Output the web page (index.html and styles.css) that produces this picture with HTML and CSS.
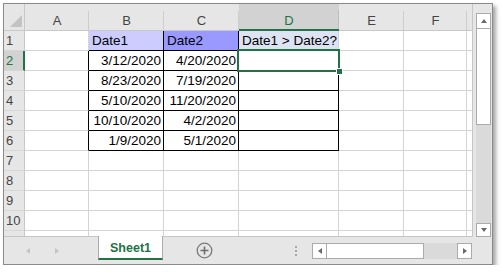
FILE: index.html
```html
<!DOCTYPE html>
<html lang="en">
<head>
    <meta charset="UTF-8">
    <title>Sheet1</title>
    <link rel="stylesheet" href="styles.css">
</head>
<body>
    <div class="window">
        <div class="main">
            <div class="sheet">
                <div class="corner">
                    <svg width="20" height="26" viewBox="0 0 20 26"><polygon points="6,23 18,23 18,11" fill="#c3c3c3"/></svg>
                </div>
                <div class="ch">A</div>
                <div class="ch">B</div>
                <div class="ch">C</div>
                <div class="ch ch-sel">D</div>
                <div class="ch">E</div>
                <div class="ch">F</div>
                <div class="ch"></div>

                <div class="rh">1</div>
                <div class="c"></div>
                <div class="c fill1 bv bb">Date1</div>
                <div class="c fill2 bv bb">Date2</div>
                <div class="c fill3 bb">Date1 &gt; Date2?</div>
                <div class="c"></div>
                <div class="c"></div>
                <div class="c"></div>

                <div class="rh rh-sel">2</div>
                <div class="c bv"></div>
                <div class="c num bk">3/12/2020</div>
                <div class="c num bk">4/20/2020</div>
                <div class="c bk active"><div class="selection"><div class="handle"></div></div></div>
                <div class="c"></div>
                <div class="c"></div>
                <div class="c"></div>

                <div class="rh">3</div>
                <div class="c bv"></div>
                <div class="c num bk">8/23/2020</div>
                <div class="c num bk">7/19/2020</div>
                <div class="c bk"></div>
                <div class="c"></div>
                <div class="c"></div>
                <div class="c"></div>

                <div class="rh">4</div>
                <div class="c bv"></div>
                <div class="c num bk">5/10/2020</div>
                <div class="c num bk">11/20/2020</div>
                <div class="c bk"></div>
                <div class="c"></div>
                <div class="c"></div>
                <div class="c"></div>

                <div class="rh">5</div>
                <div class="c bv"></div>
                <div class="c num bk">10/10/2020</div>
                <div class="c num bk">4/2/2020</div>
                <div class="c bk"></div>
                <div class="c"></div>
                <div class="c"></div>
                <div class="c"></div>

                <div class="rh">6</div>
                <div class="c bv"></div>
                <div class="c num bk">1/9/2020</div>
                <div class="c num bk">5/1/2020</div>
                <div class="c bk"></div>
                <div class="c"></div>
                <div class="c"></div>
                <div class="c"></div>

                <div class="rh">7</div>
                <div class="c"></div><div class="c"></div><div class="c"></div><div class="c"></div><div class="c"></div><div class="c"></div><div class="c"></div>
                <div class="rh">8</div>
                <div class="c"></div><div class="c"></div><div class="c"></div><div class="c"></div><div class="c"></div><div class="c"></div><div class="c"></div>
                <div class="rh">9</div>
                <div class="c"></div><div class="c"></div><div class="c"></div><div class="c"></div><div class="c"></div><div class="c"></div><div class="c"></div>
                <div class="rh">10</div>
                <div class="c"></div><div class="c"></div><div class="c"></div><div class="c"></div><div class="c"></div><div class="c"></div><div class="c"></div>
                <div class="rh"></div>
                <div class="c"></div><div class="c"></div><div class="c"></div><div class="c"></div><div class="c"></div><div class="c"></div><div class="c"></div>
            </div>

            <div class="vscroll">
                <div class="sbtn vbtn"><span class="tri tri-up"></span></div>
                <div class="vthumb"></div>
                <div class="vtrack"></div>
                <div class="sbtn vbtn vbtn-down"><span class="tri tri-down"></span></div>
            </div>
        </div>

        <div class="tabbar">
            <span class="nav nav-left"></span>
            <span class="nav nav-right"></span>
            <div class="tab">Sheet1</div>
            <div class="add">
                <svg width="17" height="17" viewBox="0 0 17 17">
                    <circle cx="8.5" cy="8.5" r="7.3" fill="none" stroke="#7a7a7a" stroke-width="1.3"/>
                    <path d="M8.5 4.5v8M4.5 8.5h8" stroke="#6e6e6e" stroke-width="1.6"/>
                </svg>
            </div>
            <div class="dots"><span></span><span></span><span></span></div>
            <div class="hscroll">
                <div class="sbtn hbtn"><span class="tri tri-left"></span></div>
                <div class="hthumb"></div>
                <div class="htrack"></div>
                <div class="sbtn hbtn"><span class="tri tri-right"></span></div>
            </div>
        </div>
    </div>
</body>
</html>
```
FILE: styles.css
```css
body {
    margin: 0;
    background: #ffffff;
    font-family: "Liberation Sans", Arial, sans-serif;
}
.window {
    margin: 3px 0 0 3px;
    width: 490px;
    height: 262px;
    box-sizing: border-box;
    border: 1px solid #8a8a8a;
    background: #e6e6e6;
    box-shadow: 3px 3px 4px rgba(0, 0, 0, 0.35);
}
.main {
    display: flex;
    height: 233px;
}
.sheet {
    width: 469px;
    height: 233px;
    box-sizing: border-box;
    border-right: 1px solid #c6c6c6;
    border-bottom: 1px solid #c6c6c6;
    overflow: hidden;
    display: grid;
    grid-template-columns: 21px 64px 75px 75px 100px 65px 63px 1fr;
    grid-template-rows: 27px repeat(11, 20px);
    background: #ffffff;
}
.corner {
    background: #e6e6e6;
    border-right: 1px solid #c8c8c8;
    border-bottom: 1px solid #c8c8c8;
}
.corner svg {
    display: block;
}
.ch {
    background: linear-gradient(#cdcdcd, #cdcdcd) right bottom / 1px 19px no-repeat, #e6e6e6;
    border-bottom: 1px solid #c8c8c8;
    color: #444444;
    font-size: 13px;
    text-align: center;
    padding-top: 8px;
    line-height: 18px;
    box-sizing: border-box;
}
.ch-sel {
    background: linear-gradient(#bdbdbd, #bdbdbd) right bottom / 1px 19px no-repeat, #d2d2d2;
    color: #217346;
    border-bottom: 2px solid #217346;
}
.rh {
    background: #e6e6e6;
    border-right: 1px solid #c8c8c8;
    border-bottom: 1px solid #d6d6d6;
    color: #444444;
    font-size: 13px;
    line-height: 19px;
    padding-left: 2px;
    box-sizing: border-box;
}
.rh-sel {
    background: #d2d2d2;
    color: #217346;
    border-right: 2px solid #217346;
}
.c {
    border-right: 1px solid #d4d4d4;
    border-bottom: 1px solid #d4d4d4;
    box-sizing: border-box;
    font-size: 13.5px;
    line-height: 19px;
    color: #000000;
    padding: 0 2px 0 3px;
    white-space: nowrap;
}
.num {
    text-align: right;
}
.fill1 {
    background: #ccccff;
}
.fill2 {
    background: #9999ff;
}
.fill3 {
    background: #dde3f3;
    padding-right: 0;
}
.bv {
    border-right-color: #000000;
}
.bb {
    border-bottom-color: #000000;
}
.bk {
    border-right-color: #000000;
    border-bottom-color: #000000;
}
.active {
    position: relative;
}
.selection {
    position: absolute;
    left: -2px;
    top: -2px;
    right: -2px;
    bottom: -2px;
    border: 2px solid #217346;
    z-index: 2;
}
.handle {
    position: absolute;
    right: -5px;
    bottom: -5px;
    width: 5px;
    height: 5px;
    background: #217346;
    border: 1px solid #ffffff;
}
.vscroll {
    width: 19px;
    padding: 9px 0 0 3px;
    box-sizing: border-box;
}
.sbtn {
    background: #ffffff;
    border: 1px solid #ababab;
    box-sizing: border-box;
    display: flex;
    align-items: center;
    justify-content: center;
}
.vbtn {
    width: 15px;
    height: 16px;
}
.vbtn-down {
    height: 14px;
}
.vthumb {
    width: 15px;
    height: 96px;
    box-sizing: border-box;
    background: #ffffff;
    border: 1px solid #ababab;
    border-top: none;
}
.vtrack {
    width: 15px;
    height: 98px;
    background: #dadada;
}
.tri {
    width: 0;
    height: 0;
}
.tri-up {
    border-left: 3px solid transparent;
    border-right: 3px solid transparent;
    border-bottom: 4px solid #6a6a6a;
}
.tri-down {
    border-left: 3px solid transparent;
    border-right: 3px solid transparent;
    border-top: 4px solid #6a6a6a;
}
.tri-left {
    border-top: 3px solid transparent;
    border-bottom: 3px solid transparent;
    border-right: 4px solid #6a6a6a;
}
.tri-right {
    border-top: 3px solid transparent;
    border-bottom: 3px solid transparent;
    border-left: 4px solid #6a6a6a;
}
.tabbar {
    display: flex;
    align-items: center;
    height: 27px;
}
.nav {
    width: 0;
    height: 0;
    border-top: 3.5px solid transparent;
    border-bottom: 3.5px solid transparent;
}
.nav-left {
    margin-left: 22px;
    border-right: 4px solid #c4c4c4;
}
.nav-right {
    margin-left: 25px;
    border-left: 4px solid #c4c4c4;
}
.tab {
    align-self: flex-start;
    margin-top: -1px;
    margin-left: 39px;
    width: 65px;
    height: 24px;
    box-sizing: border-box;
    background: #ffffff;
    border-left: 1px solid #ababab;
    border-right: 1px solid #ababab;
    border-bottom: 2px solid #217346;
    color: #217346;
    font-weight: bold;
    font-size: 12.5px;
    text-align: center;
    padding-top: 3px;
    line-height: 19px;
}
.add {
    margin-left: 33px;
    height: 17px;
}
.add svg {
    display: block;
}
.dots {
    margin-left: 82px;
    display: flex;
    flex-direction: column;
    gap: 2px;
}
.dots span {
    width: 2px;
    height: 2px;
    background: #a8a8a8;
}
.hscroll {
    margin-left: 15px;
    display: flex;
    height: 16px;
}
.hbtn {
    width: 15px;
    height: 16px;
}
.hthumb {
    width: 97px;
    height: 16px;
    box-sizing: border-box;
    background: #ffffff;
    border: 1px solid #ababab;
    border-left: none;
}
.htrack {
    width: 33px;
    background: #dadada;
}
```
